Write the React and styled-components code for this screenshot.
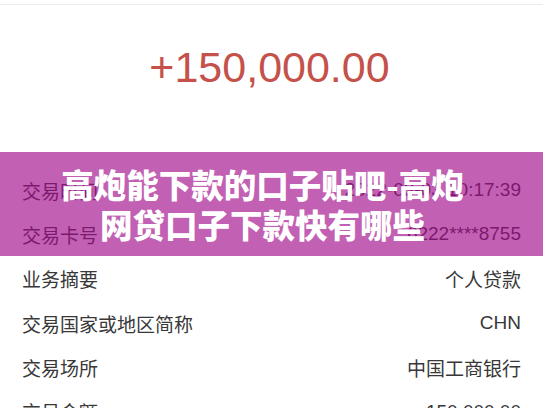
import React from 'react'
import styled, { createGlobalStyle } from 'styled-components'

const GlobalStyle = createGlobalStyle`
  html, body {
    margin: 0;
    padding: 0;
    background: #fff;
  }
  body {
    font-family: "Liberation Sans", "Noto Sans CJK SC", sans-serif;
    overflow: hidden;
  }
`

const Page = styled.div`
  position: relative;
  width: 543px;
  height: 408px;
  overflow: hidden;
  background: #fff;
`
const TopBar = styled.div`
  height: 4px;
  border-bottom: 1px solid #ececec;
`
const AmountBox = styled.div`
  height: 163px;
  display: flex;
  justify-content: center;
  padding-top: 39px;
  padding-right: 4px;
  box-sizing: border-box;
`
const Amount = styled.div`
  font-size: 43px;
  line-height: 46px;
  color: #c4514a;
`
const List = styled.div`
  padding: 0 22px;
`
const Row = styled.div`
  display: flex;
  justify-content: space-between;
  align-items: center;
  height: 44.3px;
  font-size: 19px;
  color: #383838;
`
const Overlay = styled.div`
  position: absolute;
  left: 0;
  top: 152px;
  width: 100%;
  height: 104px;
  background: rgba(162, 10, 138, 0.65);
  display: flex;
  flex-direction: column;
  align-items: center;
  padding: 12px 18px 0 0;
  box-sizing: border-box;
`
const TitleLine = styled.div`
  color: #fff;
  font-family: "Noto Sans CJK SC", sans-serif;
  font-weight: 900;
  font-size: 32.5px;
  line-height: 40px;
  white-space: nowrap;
`

const rows = [
  ['交易时间', '2022-03-03 10:17:39'],
  ['交易卡号', '6222****8755'],
  ['业务摘要', '个人贷款'],
  ['交易国家或地区简称', 'CHN'],
  ['交易场所', '中国工商银行'],
  ['交易金额', '150,000.00'],
]

export default function App() {
  return (
    <Page>
      <GlobalStyle />
      <TopBar />
      <AmountBox>
        <Amount>+150,000.00</Amount>
      </AmountBox>
      <List>
        {rows.map(([label, value]) => (
          <Row key={label}>
            <span>{label}</span>
            <span>{value}</span>
          </Row>
        ))}
      </List>
      <Overlay>
        <TitleLine>高炮能下款的口子贴吧-高炮</TitleLine>
        <TitleLine>网贷口子下款快有哪些</TitleLine>
      </Overlay>
    </Page>
  )
}
